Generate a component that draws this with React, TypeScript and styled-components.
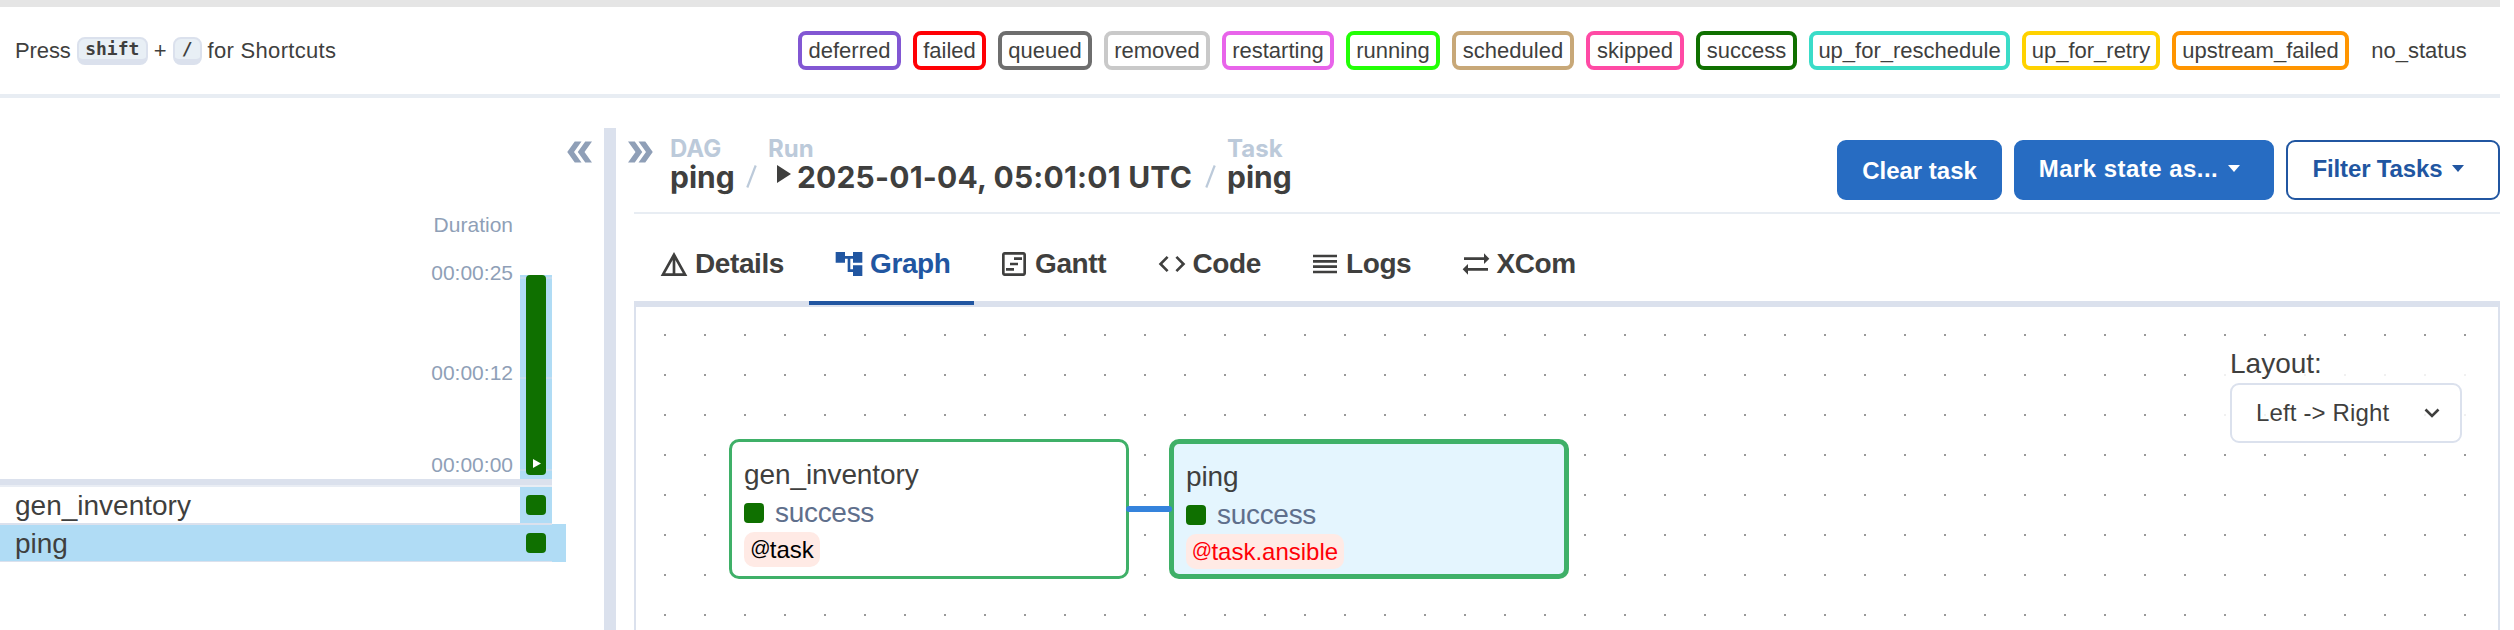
import React from "react";
import styled, { createGlobalStyle } from "styled-components";
import {
  MdAccountTree,
  MdCode,
  MdDetails,
  MdDoubleArrow,
  MdOutlineViewTimeline,
  MdReorder,
  MdSyncAlt,
} from "react-icons/md";

const color = {
  text: "#3f3f3e",
  muted: "#8f9fb7",
  faint: "#bccada",
  line: "#dbe1ed",
  lineSoft: "#e8edf3",
  blue: "#276cc2",
  blueDark: "#2156a1",
  selected: "#b0dcf5",
  success: "#0f7000",
  node: "#3fb068",
};

const GlobalStyle = createGlobalStyle`
  *, *::before, *::after { box-sizing: border-box; }
  html, body { margin: 0; background: #fff; overflow: hidden; }
  body {
    font-family: "Liberation Sans", Arial, sans-serif;
    color: ${color.text};
    font-size: 28px;
  }
`;

const Page = styled.div`
  display: flex;
  flex-direction: column;
  width: 2500px;
  height: 630px;
  overflow: hidden;
`;

const TopStrip = styled.div`
  flex: none;
  height: 7px;
  background: #e5e5e5;
`;

const Header = styled.header`
  flex: none;
  display: flex;
  align-items: center;
  justify-content: space-between;
  height: 91px;
  padding: 0 23px 0 15px;
  border-bottom: 4px solid ${color.lineSoft};
  font-size: 22px;
`;

const Shortcuts = styled.div`
  display: flex;
  align-items: center;
  line-height: 30px;
  white-space: pre;
`;

const Kbd = styled.kbd<{ $w: number }>`
  width: ${(p) => p.$w}px;
  height: 28px;
  margin: 0 6px;
  border: 2px solid ${color.line};
  border-bottom-width: 6px;
  border-radius: 8px;
  background: #e8eff5;
  font: bold 18px/20px "DejaVu Sans Mono", monospace;
  text-align: center;
`;

const Word = styled.span<{ $ls?: number }>`
  letter-spacing: ${(p) => p.$ls ?? 0}px;
`;

const Legend = styled.div`
  display: flex;
  gap: 12px;
`;

const StatePill = styled.span<{ $c: string; $w: number }>`
  display: flex;
  justify-content: center;
  width: ${(p) => p.$w}px;
  height: 39px;
  border: 4px solid ${(p) => p.$c};
  border-radius: 8px;
  line-height: 31px;
`;

const Body = styled.main`
  flex: 1;
  display: flex;
  min-height: 0;
`;

const GridPane = styled.section`
  flex: none;
  width: 604px;
  padding-top: 36px;
`;

const CollapseRow = styled.div`
  display: flex;
  justify-content: flex-end;
  height: 36px;
  padding-right: 6px;
  color: ${color.muted};
`;

const FlippedArrow = styled(MdDoubleArrow)`
  transform: rotate(180deg);
`;

const Chart = styled.div`
  display: flex;
  align-items: flex-end;
  gap: 7px;
  width: 552px;
  height: 309px;
`;

const Axis = styled.div`
  width: 513px;
  height: 100%;
  padding-top: 43px;
  text-align: right;
  font-size: 21px;
  line-height: 24px;
  color: ${color.muted};
`;

const Tick = styled.div<{ $gap?: number }>`
  margin-top: ${(p) => p.$gap ?? 0}px;
`;

const RunColumn = styled.div`
  width: 32px;
  height: 204px;
  padding: 0 6px;
  background:
    linear-gradient(#c5dcef, #c5dcef) 0 2px / 100% 2px no-repeat,
    linear-gradient(#c5dcef, #c5dcef) 0 102px / 100% 2px no-repeat,
    linear-gradient(#c5dcef, #c5dcef) 0 194px / 100% 2px no-repeat,
    ${color.selected};
`;

const RunBar = styled.div`
  display: flex;
  align-items: flex-end;
  justify-content: center;
  height: 200px;
  padding: 0 0 7px 2px;
  border-radius: 4px;
  background: ${color.success};
`;

const Rows = styled.div`
  width: 552px;
  border-top: 6px solid ${color.line};
`;

const TaskRow = styled.div<{ $selected?: boolean }>`
  display: flex;
  width: ${(p) => (p.$selected ? 566 : 552)}px;
  height: ${(p) => (p.$selected ? 38 : 39)}px;
  background: ${(p) => (p.$selected ? color.selected : "#fff")};
`;

const TaskRowInner = styled.div<{ $selected?: boolean }>`
  display: flex;
  justify-content: space-between;
  width: 552px;
  padding-left: 15px;
  border-style: solid;
  border-color: ${color.line};
  border-width: ${(p) => (p.$selected ? "1px 0 1px" : "2px 0 1px")};
  border-top-color: ${(p) => (p.$selected ? color.line : "#e9edf4")};
  line-height: 38px;
`;

const TaskCell = styled.div`
  display: flex;
  align-items: center;
  justify-content: center;
  width: 32px;
  background: ${color.selected};
`;

const StateSquare = styled.span`
  flex: none;
  width: 20px;
  height: 20px;
  border-radius: 4px;
  background: ${color.success};
`;

const Divider = styled.div`
  flex: none;
  width: 12px;
  margin-top: 30px;
  background: ${color.line};
`;

const DetailPane = styled.section`
  flex: 1;
  display: flex;
  flex-direction: column;
  min-width: 0;
  padding-left: 18px;
`;

const DetailHeader = styled.div`
  flex: none;
  display: flex;
  height: 116px;
  border-bottom: 2px solid ${color.lineSoft};
`;

const ExpandButton = styled.div`
  width: 36px;
  height: 36px;
  margin: 36px 12px 0 -12px;
  color: ${color.muted};

  svg { display: block; }
`;

const Crumbs = styled.div`
  flex: 1;
  display: flex;
  padding-top: 36px;
  font-family: Inter, "Liberation Sans", sans-serif;
  font-weight: 700;
`;

const Crumb = styled.div<{ $w: number }>`
  width: ${(p) => p.$w}px;
  white-space: nowrap;
`;

const CrumbLabel = styled.div`
  font-size: 24px;
  line-height: 29px;
  height: 28px;
  color: ${color.faint};
`;

const CrumbValue = styled.div<{ $ls?: number }>`
  display: flex;
  font-size: 30px;
  line-height: 30px;
  letter-spacing: ${(p) => p.$ls ?? 0}px;
`;

const PlayMark = styled.svg`
  flex: none;
  margin: 3px 6px 0 9px;
`;

const Slash = styled.svg<{ $gap: number }>`
  flex: none;
  margin: 31px ${(p) => p.$gap}px 0 0;
`;

const Actions = styled.div`
  display: flex;
  gap: 12px;
  padding-top: 42px;
`;

const ActionButton = styled.button<{
  $w: number;
  $outline?: boolean;
  $menu?: boolean;
  $ls?: number;
}>`
  display: flex;
  align-items: center;
  justify-content: center;
  gap: 10px;
  width: ${(p) => p.$w}px;
  height: 60px;
  padding: ${(p) => (p.$menu ? "0 9px 3px 0" : "1px 0 0")};
  border: 2px solid ${(p) => (p.$outline ? color.blueDark : color.blue)};
  border-radius: 9px;
  background: ${(p) => (p.$outline ? "#fff" : color.blue)};
  color: ${(p) => (p.$outline ? color.blueDark : "#fff")};
  font: bold 24px/30px "Liberation Sans", sans-serif;
  letter-spacing: ${(p) => p.$ls ?? 0}px;
`;

const Tabs = styled.nav`
  flex: none;
  display: flex;
  height: 93px;
  border-bottom: 6px solid ${color.line};
`;

const Tab = styled.div<{ $w: number; $active?: boolean }>`
  display: flex;
  align-items: center;
  gap: 5px;
  width: ${(p) => p.$w}px;
  height: 91px;
  padding: 13px 0 0 24px;
  border-bottom: 4px solid ${(p) => (p.$active ? color.blueDark : "transparent")};
  color: ${(p) => (p.$active ? color.blueDark : color.text)};
  font-weight: bold;
  line-height: 32px;
  letter-spacing: -0.4px;
  white-space: nowrap;

  svg { flex: none; }
`;

const Canvas = styled.div`
  position: relative;
  flex: 1;
  border: solid ${color.line};
  border-width: 0 2px;
`;

const Layer = styled.svg`
  position: absolute;
  inset: 0;
  width: 100%;
  height: 100%;
`;

const Node = styled.div<{ $x: number; $selected?: boolean }>`
  position: absolute;
  left: ${(p) => p.$x}px;
  top: 132px;
  width: 400px;
  height: 140px;
  padding: 16px 12px 0;
  border: ${(p) => (p.$selected ? 5 : 3)}px solid ${color.node};
  border-radius: 10px;
  background: ${(p) => (p.$selected ? "#e4f5fe" : "#fff")};
`;

const NodeTitle = styled.div`
  height: 34px;
  line-height: 34px;
  letter-spacing: -0.1px;
`;

const NodeState = styled.div`
  display: flex;
  align-items: center;
  gap: 11px;
  height: 38px;
  padding-top: 4px;
  line-height: 36px;
  color: #5f6f8c;
  letter-spacing: -0.3px;
`;

const Operator = styled.div<{ $c: string; $w: number }>`
  display: flex;
  align-items: center;
  justify-content: center;
  width: ${(p) => p.$w}px;
  height: 35px;
  margin-top: 2px;
  border-radius: 10px;
  background: #ffeae5;
  color: ${(p) => p.$c};
  font-size: 24px;
  line-height: 35px;
`;

const AtSign = styled.span`
  margin-bottom: 3px;
  font-size: 20px;
  letter-spacing: -0.8px;
`;

const LayoutPanel = styled.div`
  position: absolute;
  top: 37px;
  right: 26px;
  width: 252px;
  height: 106px;
  padding: 0 10px;
  background: rgba(255, 255, 255, 0.85);
`;

const LayoutLabel = styled.div`
  height: 39px;
  line-height: 40px;
`;

const Select = styled.div`
  display: flex;
  align-items: center;
  justify-content: space-between;
  height: 60px;
  padding: 0 20px 0 24px;
  border: 2px solid ${color.line};
  border-radius: 9px;
  font-size: 24px;
  letter-spacing: 0.15px;
`;

const STATES: [string, string, number][] = [
  ["deferred", "#8257d3", 103],
  ["failed", "#ff0005", 73],
  ["queued", "#6e6e6e", 94],
  ["removed", "#c9c9c9", 106],
  ["restarting", "#e864ea", 112],
  ["running", "#22ff06", 94],
  ["scheduled", "#c8a878", 122],
  ["skipped", "#ff4aa5", 98],
  ["success", "#0f7000", 101],
  ["up_for_reschedule", "#3adcc8", 201],
  ["up_for_retry", "#ffd200", 138],
  ["upstream_failed", "#ff9500", 177],
  ["no_status", "transparent", 116],
];

const Caret = () => (
  <svg width="12" height="7" viewBox="0 0 12 7">
    <path d="M0 0h12L6 7z" fill="currentColor" />
  </svg>
);

const CrumbSlash = () => (
  <Slash $gap={11} width="11" height="23" viewBox="0 0 11 23">
    <path d="M9.7.5 1.3 22.5" stroke={color.faint} strokeWidth="2.2" />
  </Slash>
);

export default function App() {
  return (
    <>
      <GlobalStyle />
      <Page>
        <TopStrip />
        <Header>
          <Shortcuts>
            <Word $ls={-0.1}>Press</Word>
            <Kbd $w={71}>shift</Kbd>
            <Word>+</Word>
            <Kbd $w={29}>/</Kbd>
            <Word $ls={0.3}>for Shortcuts</Word>
          </Shortcuts>
          <Legend>
            {STATES.map(([name, c, w]) => (
              <StatePill key={name} $c={c} $w={w}>
                {name}
              </StatePill>
            ))}
          </Legend>
        </Header>
        <Body>
          <GridPane>
            <CollapseRow>
              <FlippedArrow size={36} />
            </CollapseRow>
            <Chart>
              <Axis>
                <Tick>Duration</Tick>
                <Tick $gap={24}>00:00:25</Tick>
                <Tick $gap={76}>00:00:12</Tick>
                <Tick $gap={68}>00:00:00</Tick>
              </Axis>
              <RunColumn>
                <RunBar>
                  <svg width="8" height="9" viewBox="0 0 8 9">
                    <path d="M0 0l8 4.5L0 9z" fill="#fff" />
                  </svg>
                </RunBar>
              </RunColumn>
            </Chart>
            <Rows>
              <TaskRow>
                <TaskRowInner>
                  gen_inventory
                  <TaskCell>
                    <StateSquare />
                  </TaskCell>
                </TaskRowInner>
              </TaskRow>
              <TaskRow $selected>
                <TaskRowInner $selected>
                  ping
                  <TaskCell>
                    <StateSquare />
                  </TaskCell>
                </TaskRowInner>
              </TaskRow>
            </Rows>
          </GridPane>
          <Divider />
          <DetailPane>
            <DetailHeader>
              <ExpandButton>
                <MdDoubleArrow size={36} />
              </ExpandButton>
              <Crumbs>
                <Crumb $w={76}>
                  <CrumbLabel>DAG</CrumbLabel>
                  <CrumbValue>ping</CrumbValue>
                </Crumb>
                <CrumbSlash />
                <Crumb $w={437}>
                  <CrumbLabel>Run</CrumbLabel>
                  <CrumbValue $ls={0.2}>
                    <PlayMark width="14" height="18" viewBox="0 0 14 18">
                      <path d="M0 0l14 9L0 18z" fill="currentColor" />
                    </PlayMark>
                    2025-01-04, 05:01:01 UTC
                  </CrumbValue>
                </Crumb>
                <CrumbSlash />
                <Crumb $w={70}>
                  <CrumbLabel>Task</CrumbLabel>
                  <CrumbValue>ping</CrumbValue>
                </Crumb>
              </Crumbs>
              <Actions>
                <ActionButton $w={165}>Clear task</ActionButton>
                <ActionButton $w={260} $menu $ls={0.45}>
                  Mark state as... <Caret />
                </ActionButton>
                <ActionButton $w={214} $outline $menu $ls={-0.15}>
                  Filter Tasks <Caret />
                </ActionButton>
              </Actions>
            </DetailHeader>
            <Tabs>
              <Tab $w={175}>
                <MdDetails size={32} />
                Details
              </Tab>
              <Tab $w={165} $active>
                <MdAccountTree size={32} />
                Graph
              </Tab>
              <Tab $w={157.5}>
                <MdOutlineViewTimeline size={32} />
                Gantt
              </Tab>
              <Tab $w={153.5}>
                <MdCode size={32} />
                Code
              </Tab>
              <Tab $w={150.5}>
                <MdReorder size={32} />
                Logs
              </Tab>
              <Tab $w={160}>
                <MdSyncAlt size={32} />
                XCom
              </Tab>
            </Tabs>
            <Canvas>
              <Layer>
                <defs>
                  <pattern id="dots" x="28" y="27" width="40" height="40" patternUnits="userSpaceOnUse">
                    <rect width="2" height="2" fill="#999" />
                  </pattern>
                </defs>
                <rect width="100%" height="100%" fill="url(#dots)" />
              </Layer>
              <Node $x={93}>
                <NodeTitle>gen_inventory</NodeTitle>
                <NodeState>
                  <StateSquare />
                  success
                </NodeState>
                <Operator $c="#000" $w={76}>
                  <AtSign>@</AtSign>task
                </Operator>
              </Node>
              <Node $x={533} $selected>
                <NodeTitle>ping</NodeTitle>
                <NodeState>
                  <StateSquare />
                  success
                </NodeState>
                <Operator $c="#ff0008" $w={158}>
                  <AtSign>@</AtSign>task.ansible
                </Operator>
              </Node>
              <Layer>
                <path d="M493 202H533" stroke="#3583dc" strokeWidth="6" strokeLinecap="round" />
              </Layer>
              <LayoutPanel>
                <LayoutLabel>Layout:</LayoutLabel>
                <Select>
                  Left -&gt; Right
                  <svg width="16" height="10" viewBox="0 0 16 10" fill="none">
                    <path d="M1.5 1.5 8 8l6.5-6.5" stroke="currentColor" strokeWidth="2.6" />
                  </svg>
                </Select>
              </LayoutPanel>
            </Canvas>
          </DetailPane>
        </Body>
      </Page>
    </>
  );
}
